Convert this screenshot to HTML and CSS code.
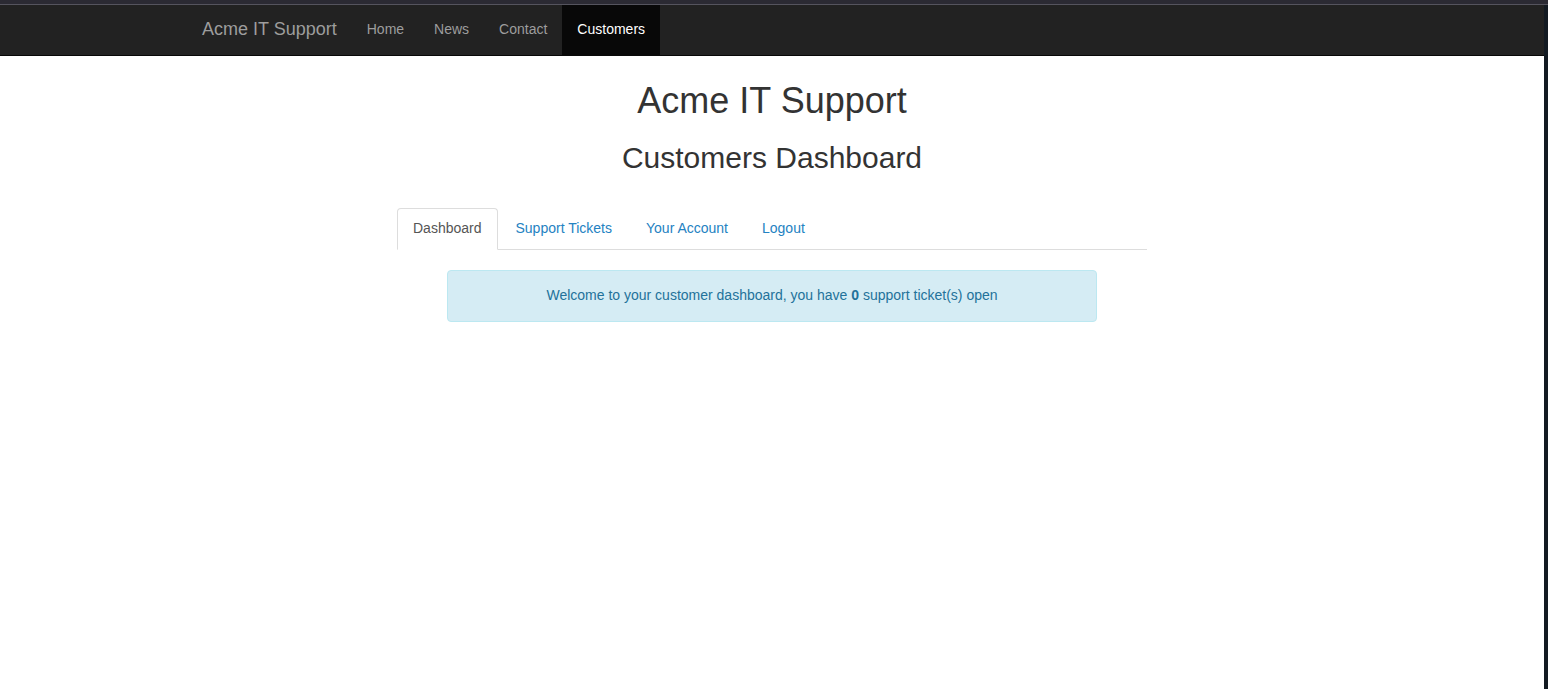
FILE: index.html
```html
<!DOCTYPE html>
<html lang="en">
<head>
<meta charset="utf-8">
<title>Acme IT Support - Customers</title>
<link rel="stylesheet" href="styles.css">
</head>
<body>
<div class="chrome-top"></div>
<div class="frame">
  <div class="page">
    <nav class="navbar">
      <div class="container">
        <a class="brand" href="#">Acme IT Support</a>
        <ul class="nav-links">
          <li><a href="#">Home</a></li>
          <li><a href="#">News</a></li>
          <li><a href="#">Contact</a></li>
          <li class="active"><a href="#">Customers</a></li>
        </ul>
      </div>
    </nav>
    <main class="content">
      <h1 class="title">Acme IT Support</h1>
      <h2 class="subtitle">Customers Dashboard</h2>
      <div class="panel">
        <ul class="tabs">
          <li class="active"><a href="#">Dashboard</a></li>
          <li><a href="#">Support Tickets</a></li>
          <li><a href="#">Your Account</a></li>
          <li><a href="#">Logout</a></li>
        </ul>
        <div class="alert">Welcome to your customer dashboard, you have <strong>0</strong> support ticket(s) open</div>
      </div>
    </main>
  </div>
  <div class="scroll-strip"></div>
</div>
</body>
</html>
```

FILE: styles.css
```css
html, body {
  margin: 0;
  padding: 0;
  height: 100%;
}
body {
  font-family: "Liberation Sans", Arial, Helvetica, sans-serif;
  font-size: 14px;
  line-height: 20px;
  color: #333;
  background: #fff;
  display: flex;
  flex-direction: column;
}
.chrome-top {
  height: 4px;
  background: #2b2a33;
  border-bottom: 1px solid #55545e;
  flex: none;
}
.frame {
  flex: 1;
  display: flex;
}
.page {
  flex: 1;
  background: #fff;
}
.scroll-strip {
  width: 4px;
  background: #131a22;
}
.navbar {
  background: #222;
  border-bottom: 1px solid #080808;
  height: 50px;
}
.container {
  width: 1170px;
  margin: 0 auto;
  display: flex;
  align-items: stretch;
  height: 50px;
}
.brand {
  padding: 14px 15px 16px;
  font-size: 18px;
  line-height: 20px;
  color: #9d9d9d;
  text-decoration: none;
}
.nav-links {
  list-style: none;
  margin: 0;
  padding: 0;
  display: flex;
}
.nav-links a {
  display: block;
  padding: 14px 15px 16px;
  line-height: 20px;
  color: #9d9d9d;
  text-decoration: none;
}
.nav-links .active a {
  background: #080808;
  color: #fff;
}
.content {
  text-align: center;
}
.title {
  font-size: 36px;
  font-weight: 500;
  line-height: 1.1;
  margin: 25px 0 10px;
}
.subtitle {
  font-size: 30px;
  font-weight: 500;
  line-height: 1.1;
  margin: 20px 0 10px;
}
.panel {
  width: 750px;
  margin: 34px auto 0;
}
.tabs {
  list-style: none;
  margin: 0;
  padding: 0;
  display: flex;
  border-bottom: 1px solid #ddd;
}
.tabs li {
  margin-bottom: -1px;
}
.tabs a {
  display: block;
  padding: 9px 15px 11px;
  margin-right: 2px;
  line-height: 20px;
  border: 1px solid transparent;
  border-radius: 4px 4px 0 0;
  color: #2482c2;
  text-decoration: none;
}
.tabs .active a {
  color: #555;
  background: #fff;
  border-color: #ddd #ddd transparent;
}
.alert {
  width: 618px;
  margin: 20px auto 0;
  padding: 14px 15px 16px;
  background: #d5ecf4;
  border: 1px solid #bce8f1;
  border-radius: 4px;
  color: #23729a;
  text-align: center;
}
```
